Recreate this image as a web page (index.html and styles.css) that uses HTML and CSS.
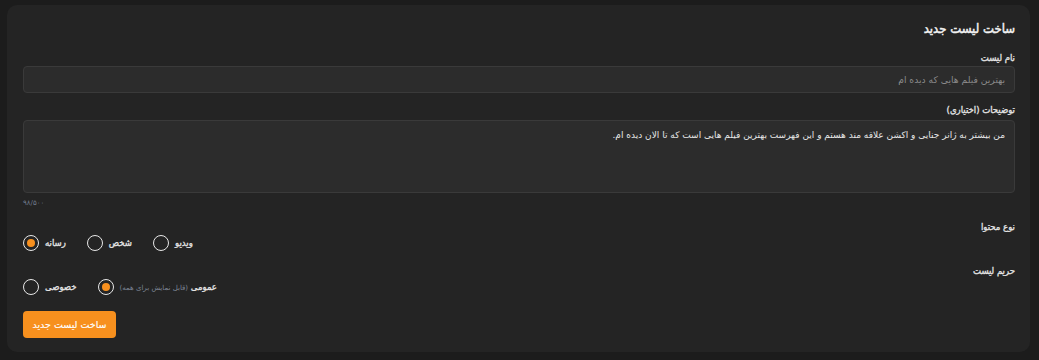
FILE: index.html
```html
<!DOCTYPE html>
<html lang="fa" dir="rtl">
<head>
<meta charset="utf-8">
<title>ساخت لیست جدید</title>
<link rel="stylesheet" href="styles.css">
</head>
<body>
<main class="card">
  <h1 class="title">ساخت لیست جدید</h1>

  <div class="field field-name">
    <label class="label" for="name">نام لیست</label>
    <input class="input" id="name" type="text" placeholder="بهترین فیلم هایی که دیده ام">
  </div>

  <div class="field field-desc">
    <label class="label" for="desc">توضیحات (اختیاری)</label>
    <div class="textarea" id="desc">من بیشتر به ژانر جنایی و اکشن علاقه مند هستم و این فهرست بهترین فیلم هایی است که تا الان دیده ام.</div>
    <div class="counter">۹۸/۵۰۰</div>
  </div>

  <div class="field field-type">
    <div class="label">نوع محتوا</div>
    <div class="radios">
      <div class="radio"><span class="radio-text">ویدیو</span><span class="dot"></span></div>
      <div class="radio"><span class="radio-text">شخص</span><span class="dot"></span></div>
      <div class="radio"><span class="radio-text">رسانه</span><span class="dot checked"></span></div>
    </div>
  </div>

  <div class="field field-privacy">
    <div class="label">حریم لیست</div>
    <div class="radios">
      <div class="radio"><span class="radio-text">عمومی <span class="hint">(قابل نمایش برای همه)</span></span><span class="dot checked"></span></div>
      <div class="radio"><span class="radio-text">خصوصی</span><span class="dot"></span></div>
    </div>
  </div>

  <div class="actions">
    <button class="btn" type="button">ساخت لیست جدید</button>
  </div>
</main>
</body>
</html>
```

FILE: styles.css
```css
* { box-sizing: border-box; }
html, body { margin: 0; padding: 0; }
body {
  background: #1c1c1c;
  font-family: "DejaVu Sans", sans-serif;
  color: #e6e6e6;
  padding: 5px 9px 0 7px;
  width: 1039px;
  height: 360px;
  overflow: hidden;
}
.card {
  background: #242424;
  border-radius: 10px;
  padding: 14px 15px 14px 16px;
  height: 347px;
}
.title {
  margin: 0;
  font-size: 13px;
  font-weight: normal;
  font-stretch: condensed;
  -webkit-text-stroke: 0.45px #f2f2f2;
  line-height: 20px;
  color: #f2f2f2;
}
.label {
  display: block;
  font-size: 9.5px;
  font-weight: normal;
  font-stretch: condensed;
  -webkit-text-stroke: 0.3px #e6e6e6;
  line-height: 14px;
  color: #e6e6e6;
}
.field-name { margin-top: 12px; }
.field-name .label { margin-bottom: 1px; }
.input {
  display: block;
  width: 100%;
  height: 27px;
  background: #2c2c2c;
  border: 1px solid #3a3a3a;
  border-radius: 4px;
  padding: 0 9px;
  font-family: inherit;
  font-size: 9.2px;
  color: #e6e6e6;
  outline: none;
}
.input::placeholder { color: #8b8b8b; }
.field-desc { margin-top: 10px; }
.field-desc .label { margin-bottom: 3px; }
.textarea {
  height: 73px;
  background: #2c2c2c;
  border: 1px solid #3a3a3a;
  border-radius: 4px;
  padding: 6px 9px;
  font-size: 9px;
  line-height: 16px;
  color: #e6e6e6;
}
.counter {
  margin-top: 4px;
  text-align: left;
  font-size: 7px;
  line-height: 12px;
  color: #6f7a8c;
}
.field-type { margin-top: 11px; }
.field-privacy { margin-top: 13px; }
.radios {
  display: flex;
  justify-content: flex-end;
  gap: 21px;
  margin-top: 1px;
}
.radio {
  display: flex;
  align-items: center;
  gap: 6px;
  height: 16px;
}
.radio-text {
  font-size: 9.5px;
  font-stretch: condensed;
  -webkit-text-stroke: 0.3px #e6e6e6;
  color: #e6e6e6;
  line-height: 16px;
}
.hint {
  font-stretch: normal;
  -webkit-text-stroke: 0;
  font-size: 7px;
  color: #7d8594;
}
.dot {
  width: 16px;
  height: 16px;
  border-radius: 50%;
  border: 1.5px solid #e8e8e8;
  display: flex;
  align-items: center;
  justify-content: center;
  flex: none;
}
.dot.checked::after {
  content: "";
  width: 8px;
  height: 8px;
  border-radius: 50%;
  background: #f7901e;
}
.actions {
  display: flex;
  justify-content: flex-end;
  margin-top: 16px;
}
.btn {
  height: 27px;
  width: 93px;
  border: 0;
  border-radius: 4px;
  background: #f7901e;
  color: #ffffff;
  font-family: inherit;
  font-size: 9.5px;
  -webkit-text-stroke: 0.15px #ffffff;
  padding: 0;
}
```
